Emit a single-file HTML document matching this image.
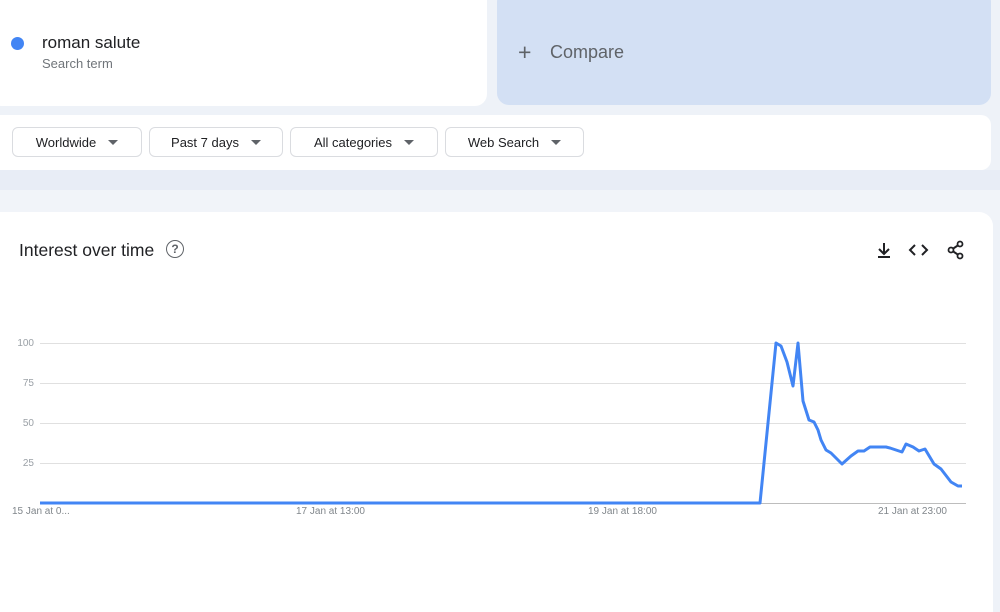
<!DOCTYPE html><html><head><style>
body{margin:0;width:1000px;height:573px;background:#eef2f8;font-family:"Liberation Sans",sans-serif;position:relative;overflow:hidden}
.a{position:absolute}
.btn{position:absolute;top:127px;height:30px;border:1px solid #dadce0;border-radius:6px;background:#fff;font-size:13px;color:#202124;display:flex;align-items:center;justify-content:center;box-sizing:border-box}
.btn i{display:inline-block;width:0;height:0;border-left:5px solid transparent;border-right:5px solid transparent;border-top:5px solid #5f6368;margin-left:12px}
.yl{position:absolute;left:0;width:34px;text-align:right;font-size:10px;color:#9aa0a6}
.xl{position:absolute;top:506px;font-size:10px;color:#80868b}
</style></head><body>
<div class="a" style="left:0;top:170px;width:1000px;height:20px;background:#e8edf6"></div>
<div class="a" style="left:0;top:190px;width:1000px;height:30px;background:#f1f4f9"></div>
<div class="a" style="left:-10px;top:0;width:497px;height:106px;background:#fff;border-radius:0 0 12px 12px"></div>
<div class="a" style="left:11px;top:37px;width:13px;height:13px;border-radius:50%;background:#4285f4"></div>
<div class="a" style="left:42px;top:33px;font-size:17px;color:#202124">roman salute</div>
<div class="a" style="left:42px;top:56px;font-size:13px;color:#70757a">Search term</div>
<div class="a" style="left:497px;top:-10px;width:494px;height:115px;background:#d3e0f4;border-radius:12px"></div>
<div class="a" style="left:518px;top:39px;font-size:23px;color:#5f6368">+</div>
<div class="a" style="left:550px;top:42px;font-size:18px;color:#5f6368">Compare</div>
<div class="a" style="left:0;top:115px;width:991px;height:55px;background:#fff;border-radius:0 10px 10px 0"></div>
<div class="btn" style="left:12px;width:130px">Worldwide<i></i></div>
<div class="btn" style="left:149px;width:134px">Past 7 days<i></i></div>
<div class="btn" style="left:290px;width:148px">All categories<i></i></div>
<div class="btn" style="left:445px;width:139px">Web Search<i></i></div>
<div class="a" style="left:0;top:212px;width:993px;height:400px;background:#fff;border-radius:0 14px 0 0"></div>
<div class="a" style="left:19px;top:240px;font-size:17.5px;color:#202124">Interest over time</div>
<div class="a" style="left:166px;top:240px;width:16px;height:16px;border:1.6px solid #5f6368;border-radius:50%;font-size:12px;font-weight:bold;color:#5f6368;text-align:center;line-height:16px">?</div>
<svg class="a" style="left:870px;top:238px" width="100" height="24" viewBox="0 0 100 24">
<g fill="none" stroke="#202124" stroke-width="2">
<path d="M14 5v10M9 11l5 5 5-5M8 19h12"/>
<path d="M45 7l-5 5 5 5M52 7l5 5-5 5"/>
<path d="M90 6l-9 6 9 6"/>
</g>
<g fill="#fff" stroke="#202124" stroke-width="1.8"><circle cx="90" cy="6" r="2.5"/><circle cx="81" cy="12" r="2.5"/><circle cx="90" cy="18" r="2.5"/></g>
</svg>
<svg class="a" style="left:0;top:0" width="1000" height="573">
<g stroke="#e0e0e0" stroke-width="1"><line x1="40" y1="343.5" x2="966" y2="343.5"/><line x1="40" y1="383.5" x2="966" y2="383.5"/><line x1="40" y1="423.5" x2="966" y2="423.5"/><line x1="40" y1="463.5" x2="966" y2="463.5"/><line x1="40" y1="503.5" x2="966" y2="503.5" stroke="#bdbdbd"/></g>
<polyline fill="none" stroke="#4285f4" stroke-width="3" stroke-linejoin="round" points="40,503 760,503 776,343 781,346 787,362 793,386 798,343 803,401 809,420 814,422 818,430 821,440 826,450 831,453 841,463 842,464 851,456 858,451 864,451 870,447 880,447 886,447 890,448 902,452 906,444 913,447 919,451 925,449 934,464 941,469 951,482 958,486 962,486"/>
</svg>
<div class="yl" style="top:338px">100</div><div class="yl" style="top:378px">75</div><div class="yl" style="top:418px">50</div><div class="yl" style="top:458px">25</div>
<div class="xl" style="left:12px">15 Jan at 0...</div>
<div class="xl" style="left:296px">17 Jan at 13:00</div>
<div class="xl" style="left:588px">19 Jan at 18:00</div>
<div class="xl" style="left:878px">21 Jan at 23:00</div>
</body></html>
